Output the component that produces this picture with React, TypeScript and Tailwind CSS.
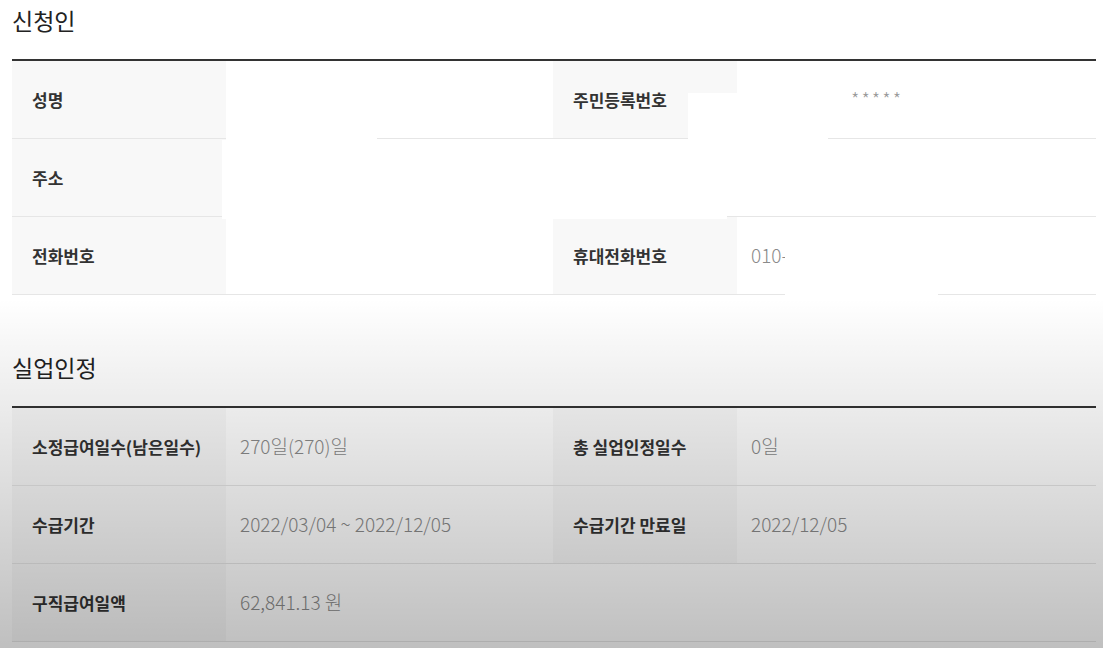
const font = { fontFamily: '"Noto Sans CJK KR", "Noto Sans", sans-serif' };

type Cell = { label: string; value?: string; wide?: boolean; valueClass?: string };

const Label = ({ children }: { children: string }) => (
  <div className="flex items-center bg-[#f8f8f8] pl-5 text-[17px] font-semibold text-[#333]">
    {children}
  </div>
);

const Value = ({ children, className = "" }: { children?: string; className?: string }) => (
  <div className={`flex items-center bg-white pl-[14px] text-[19px] font-light text-[#8a8a8a] ${className}`}>
    {children}
  </div>
);

const Row = ({ cells }: { cells: Cell[] }) => (
  <div className="grid h-[78px] grid-cols-[214px_327px_184px_1fr] border-b border-[#e6e6e6]">
    {cells.map((c) => (
      <div key={c.label} className={`grid ${c.wide ? "col-span-4 grid-cols-[214px_1fr]" : "col-span-2 grid-cols-subgrid"}`}>
        <Label>{c.label}</Label>
        <Value className={c.valueClass}>{c.value}</Value>
      </div>
    ))}
  </div>
);

const Section = ({ title, rows, children }: { title: string; rows: Cell[][]; children?: React.ReactNode }) => (
  <section>
    <h2 className="h-[59px] pt-[2px] text-[23px] leading-[36px] font-normal text-[#222]">{title}</h2>
    <div className="relative border-t-2 border-[#333]">
      {rows.map((r, i) => (
        <Row key={i} cells={r} />
      ))}
      {children}
    </div>
  </section>
);

export default function App() {
  return (
    <div style={font} className="relative flex h-[648px] w-[1103px] flex-col gap-[52px] overflow-hidden bg-white pr-[7px] pl-[12px]">
      <Section
        title="신청인"
        rows={[
          [
            { label: "성명", value: "" },
            { label: "주민등록번호", value: "*****", valueClass: "pl-[114px] text-[16px] tracking-[2px] text-[#999]" },
          ],
          [{ label: "주소", value: "", wide: true }],
          [
            { label: "전화번호", value: "" },
            { label: "휴대전화번호", value: "010-" },
          ],
        ]}
      >
        {/* redacted areas */}
        <div className="absolute top-[70px] left-[214px] h-[9px] w-[151px] bg-white" />
        <div className="absolute top-[32px] left-[676px] h-[48px] w-[140px] bg-white" />
        <div className="absolute top-[79px] left-[210px] h-[79px] w-[505px] bg-white" />
        <div className="absolute top-[168px] left-[773px] h-[68px] w-[153px] bg-white" />
      </Section>

      <Section
        title="실업인정"
        rows={[
          [
            { label: "소정급여일수(남은일수)", value: "270일(270)일" },
            { label: "총 실업인정일수", value: "0일" },
          ],
          [
            { label: "수급기간", value: "2022/03/04 ~ 2022/12/05" },
            { label: "수급기간 만료일", value: "2022/12/05" },
          ],
          [{ label: "구직급여일액", value: "62,841.13 원", wide: true }],
        ]}
      />

      {/* video darkening toward the bottom */}
      <div className="pointer-events-none absolute inset-0 bg-linear-to-b from-transparent from-[46%] to-black/25" />
    </div>
  );
}
